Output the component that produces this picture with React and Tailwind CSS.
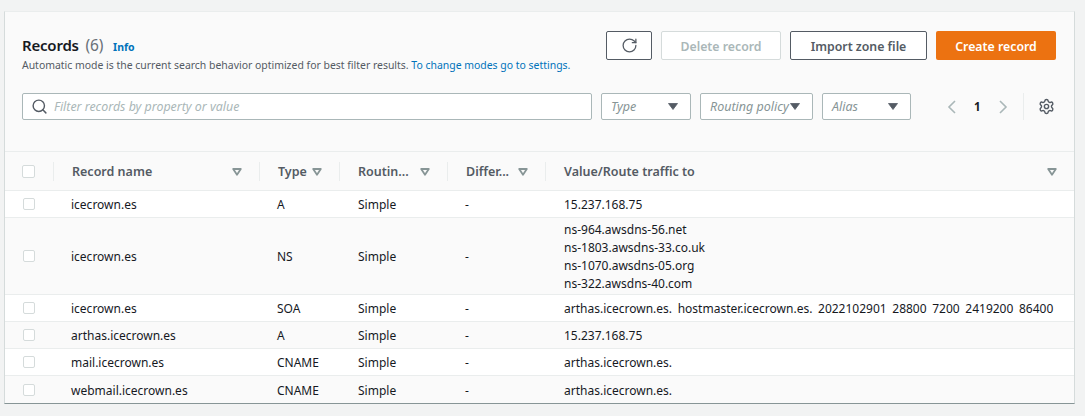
import { RotateCw, Search, Settings } from "lucide-react";

const rowGrid = "grid grid-cols-[49px_206px_80px_108px_98px_1fr]";

const records = [
  { name: "icecrown.es", type: "A", value: ["15.237.168.75"] },
  { name: "icecrown.es", type: "NS", value: ["ns-964.awsdns-56.net", "ns-1803.awsdns-33.co.uk", "ns-1070.awsdns-05.org", "ns-322.awsdns-40.com"] },
  { name: "icecrown.es", type: "SOA", value: ["arthas.icecrown.es. hostmaster.icecrown.es. 2022102901 28800 7200 2419200 86400"] },
  { name: "arthas.icecrown.es", type: "A", value: ["15.237.168.75"] },
  { name: "mail.icecrown.es", type: "CNAME", value: ["arthas.icecrown.es."] },
  { name: "webmail.icecrown.es", type: "CNAME", value: ["arthas.icecrown.es."] }
];

function SortIcon() {
  return (
    <svg width="10" height="8" viewBox="0 0 10 8" className="shrink-0">
      <path d="M1.2 1h7.6L5 6.8z" fill="none" stroke="#879596" strokeWidth="1.8" strokeLinejoin="round" />
    </svg>
  );
}

function Caret() {
  return (
    <svg width="10" height="7" viewBox="0 0 10 7" className="shrink-0">
      <path d="M0.5 0.5h9L5 6.5z" fill="#545b64" stroke="#545b64" strokeWidth="0.8" strokeLinejoin="round" />
    </svg>
  );
}

function Chevron({ points }) {
  return (
    <svg width="9" height="14" viewBox="0 0 9 14" className="shrink-0">
      <polyline points={points} fill="none" stroke="#aab7b8" strokeWidth="1.6" />
    </svg>
  );
}

function Filter({ label, width }) {
  return (
    <div className={`flex h-[27px] items-center justify-between rounded-[2px] border border-[#aab7b8] bg-white pl-[9px] pr-[12px] ${width}`}>
      <span className="pt-[1px] text-[12.5px] italic text-[#879596]">{label}</span>
      <Caret />
    </div>
  );
}

function HeaderCell({ label, last }) {
  return (
    <div className={`flex h-[19px] items-center justify-between pl-[18px] pr-[17px] pt-[2px] ${last ? "" : "border-r border-[#eaeded]"}`}>
      <span className="text-[12.5px] font-semibold text-[#545b64]">{label}</span>
      <SortIcon />
    </div>
  );
}

function Checkbox({ className }) {
  return <div className={`h-[12px] w-[12px] rounded-[2px] border border-[#d5dbdb] bg-white ${className}`} />;
}

export default function App() {
  return (
    <div className="h-[416px] w-[1085px] overflow-hidden bg-[#f2f3f3] pl-[4px] pt-[11px] font-['Noto_Sans',sans-serif] text-[#16191f]">
      <div className="w-[1071px] border-x border-b border-x-[#d5dbdb] border-b-[#879596] border-t border-t-[#eaeded]">
        <div className="h-[139px] bg-[#fafafa] pl-[17px] pr-[18px]">
          <div className="flex justify-between pt-[19px]">
            <div className="pt-[4px]">
              <div className="flex items-baseline gap-[10px] leading-[20px]">
                <span className="text-[15px] font-semibold tracking-[-0.2px]">
                  Records <span className="ml-[3px] text-[15.5px] font-normal text-[#687078]">(6)</span>
                </span>
                <span className="text-[10.5px] font-bold text-[#0073bb]">Info</span>
              </div>
              <p className="mt-[1px] text-[10.44px] leading-[14px] text-[#545b64]">
                Automatic mode is the current search behavior optimized for best filter results. <span className="text-[#0073bb]">To change modes go to settings.</span>
              </p>
            </div>
            <div className="flex gap-[9px] text-[12.3px] font-semibold">
              <button className="flex h-[29px] w-[46px] items-center justify-center rounded-[2px] border border-[#545b64] bg-white text-[#545b64]">
                <RotateCw size={17} strokeWidth={1.8} />
              </button>
              <button className="h-[29px] w-[120px] rounded-[2px] border border-[#d5dbdb] bg-white pt-[3px] text-[#aab7b8]">Delete record</button>
              <button className="h-[29px] w-[137px] rounded-[2px] border border-[#545b64] bg-white pt-[3px] text-[#545b64]">Import zone file</button>
              <button className="h-[29px] w-[120px] rounded-[2px] bg-[#ec7211] pt-[3px] text-white">Create record</button>
            </div>
          </div>
          <div className="mt-[21px] flex items-center">
            <div className="flex h-[27px] w-[570px] items-center gap-[6px] rounded-[2px] border border-[#aab7b8] bg-white pl-[8px]">
              <Search size={17} strokeWidth={2} className="text-[#545b64]" />
              <span className="pt-[1px] text-[12.4px] italic text-[#aab7b8]">Filter records by property or value</span>
            </div>
            <div className="ml-[9px] flex gap-[9px]">
              <Filter label="Type" width="w-[90px]" />
              <Filter label="Routing policy" width="w-[113px]" />
              <Filter label="Alias" width="w-[89px]" />
            </div>
            <div className="ml-[36px] flex items-center">
              <Chevron points="8,1 2,7 8,13" />
              <span className="ml-[18px] pt-[1px] text-[11.5px] font-bold">1</span>
              <div className="ml-[18px]">
                <Chevron points="1,1 7,7 1,13" />
              </div>
              <div className="ml-[15px] flex h-[27px] items-center border-l border-[#eaeded] pl-[14px]">
                <Settings size={17} strokeWidth={2} className="text-[#545b64]" />
              </div>
            </div>
          </div>
        </div>
        <div className={`${rowGrid} h-[40px] items-center border-y border-[#eaeded] bg-[#fafafa]`}>
          <div className="flex h-[19px] items-center border-r border-[#eaeded] pl-[17px]">
            <Checkbox className="h-[13px] w-[13px] border-[#aab7b8]" />
          </div>
          <HeaderCell label="Record name" />
          <HeaderCell label="Type" />
          <HeaderCell label="Routin..." />
          <HeaderCell label="Differ..." />
          <HeaderCell label="Value/Route traffic to" last />
        </div>
        {records.map((record, i) => (
          <div
            key={i}
            className={`${rowGrid} items-center border-b border-[#eaeded] pt-[2px] text-[12px] last:border-b-0 ${i % 2 ? "bg-[#fafafa]" : "bg-white"} ${record.value.length > 1 ? "h-[77px]" : "h-[27px]"}`}
          >
            <div className="pl-[18px]">
              <Checkbox className="-translate-y-[1px]" />
            </div>
            <div className="pl-[17px]">{record.name}</div>
            <div className="pl-[17px]">{record.type}</div>
            <div className="pl-[18px]">Simple</div>
            <div className="pl-[17px]">-</div>
            <div className="pl-[18px] leading-[18px] [word-spacing:2.5px]">
              {record.value.map((line) => (
                <div key={line} className="whitespace-nowrap">{line}</div>
              ))}
            </div>
          </div>
        ))}
      </div>
    </div>
  );
}
